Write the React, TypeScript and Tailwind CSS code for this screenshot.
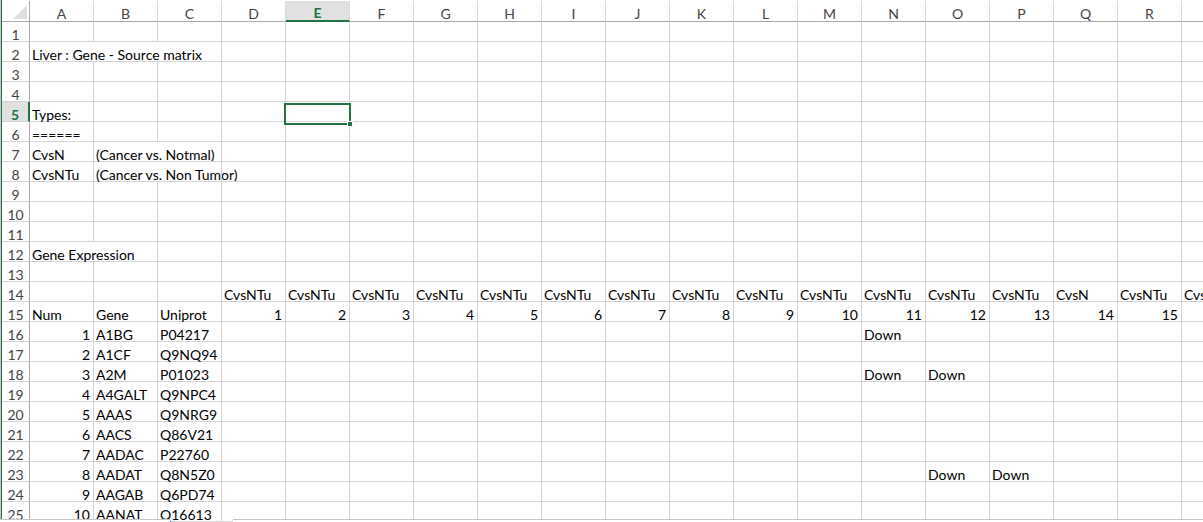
import React from 'react';

const COLS = 'ABCDEFGHIJKLMNOPQRS'.split('');

interface Cell {
  t: string;
  right?: boolean;
  span?: number;
}

const genes: Array<[string, string]> = [
  ['A1BG', 'P04217'],
  ['A1CF', 'Q9NQ94'],
  ['A2M', 'P01023'],
  ['A4GALT', 'Q9NPC4'],
  ['AAAS', 'Q9NRG9'],
  ['AACS', 'Q86V21'],
  ['AADAC', 'P22760'],
  ['AADAT', 'Q8N5Z0'],
  ['AAGAB', 'Q6PD74'],
  ['AANAT', 'Q16613'],
];

function buildRows() {
  const rows: Record<number, Record<number, Cell>> = {};
  for (let r = 1; r <= 25; r++) rows[r] = {};
  rows[2][0] = { t: 'Liver : Gene - Source matrix', span: 3 };
  rows[5][0] = { t: 'Types:' };
  rows[6][0] = { t: '======' };
  rows[7][0] = { t: 'CvsN' };
  rows[7][1] = { t: '(Cancer vs. Notmal)', span: 2 };
  rows[8][0] = { t: 'CvsNTu' };
  rows[8][1] = { t: '(Cancer vs. Non Tumor)', span: 2 };
  rows[12][0] = { t: 'Gene Expression', span: 2 };
  for (let c = 3; c <= 18; c++) {
    rows[14][c] = { t: c === 16 ? 'CvsN' : 'CvsNTu' };
    rows[15][c] = { t: String(c - 2), right: true };
  }
  rows[15][0] = { t: 'Num' };
  rows[15][1] = { t: 'Gene' };
  rows[15][2] = { t: 'Uniprot' };
  genes.forEach(([g, u], i) => {
    rows[16 + i][0] = { t: String(i + 1), right: true };
    rows[16 + i][1] = { t: g };
    rows[16 + i][2] = { t: u };
  });
  rows[16][13] = { t: 'Down' };
  rows[18][13] = { t: 'Down' };
  rows[18][14] = { t: 'Down' };
  rows[23][14] = { t: 'Down' };
  rows[23][15] = { t: 'Down' };
  return rows;
}

const rows = buildRows();

export default function App() {
  return (
    <div className="relative w-[1203px] h-[522px] overflow-hidden bg-white flex font-['Lato',sans-serif] text-[14px] leading-[16px] text-black">
      <div className="w-px shrink-0 bg-[#c6c6c6]" />
      <div className="w-px shrink-0 bg-[#217346]" />
      <div className="flex flex-col shrink-0">
        <div className="h-1" />
        <div className="grid grid-cols-[28px_repeat(19,64px)]">
          {/* column headers */}
          <div className="h-[21px] border-b border-r border-[#ababab] relative">
            <svg className="absolute left-[11px] top-[4px]" width="14" height="14" viewBox="0 0 14 14">
              <polygon points="14,0 14,14 0,14" fill="#dfdfdf" />
            </svg>
          </div>
          {COLS.map((c) => (
            <div
              key={c}
              className={`h-[21px] pt-[5px] flex items-center justify-center text-[#444] border-r border-r-[#dadada] ${
                c === 'E'
                  ? 'bg-[#e1e1e1] border-b-2 border-b-[#217346] font-bold text-[#217346]'
                  : 'border-b border-b-[#ababab]'
              }`}
            >
              {c}
            </div>
          ))}

          {Array.from({ length: 25 }, (_, i) => i + 1).map((r) => {
            const cells = rows[r];
            const hidden = new Set<number>();
            Object.entries(cells).forEach(([k, v]) => {
              const c = Number(k);
              for (let s = 0; s < (v.span ?? 1) - 1; s++) hidden.add(c + s);
            });
            return (
              <React.Fragment key={r}>
                <div
                  className={`h-5 pt-1.5 flex items-center justify-center border-b border-[#d4d4d4] ${
                    r === 5
                      ? 'bg-[#e1e1e1] font-bold text-[#217346] border-r-2 border-r-[#217346]'
                      : 'text-[#444] border-r border-r-[#ababab]'
                  }`}
                >
                  {r}
                </div>
                {COLS.map((_, c) => {
                  const cell = cells[c];
                  return (
                    <div
                      key={c}
                      className={`h-5 pt-1.5 flex items-center whitespace-nowrap border-b border-[#d4d4d4] ${
                        hidden.has(c) ? '' : 'border-r'
                      } ${cell?.right ? 'justify-end pr-[3px]' : 'pl-[2px]'}`}
                    >
                      {cell ? cell.t : ''}
                    </div>
                  );
                })}
              </React.Fragment>
            );
          })}
        </div>
      </div>

      {/* active cell E5 */}
      <div className="absolute left-[284px] top-[103px] w-[67px] h-[22px] border-2 border-[#217346]" />
      <div className="absolute left-[347px] top-[121px] w-[6px] h-[6px] bg-[#217346] border border-white" />

      {/* sheet bar edge */}
      <div className="absolute left-0 top-[519px] w-[170px] h-[3px] bg-white border-t border-[#c6c6c6]" />
      <div className="absolute left-[233px] right-0 top-[519px] h-[3px] bg-white border-t border-[#c6c6c6]" />
    </div>
  );
}
